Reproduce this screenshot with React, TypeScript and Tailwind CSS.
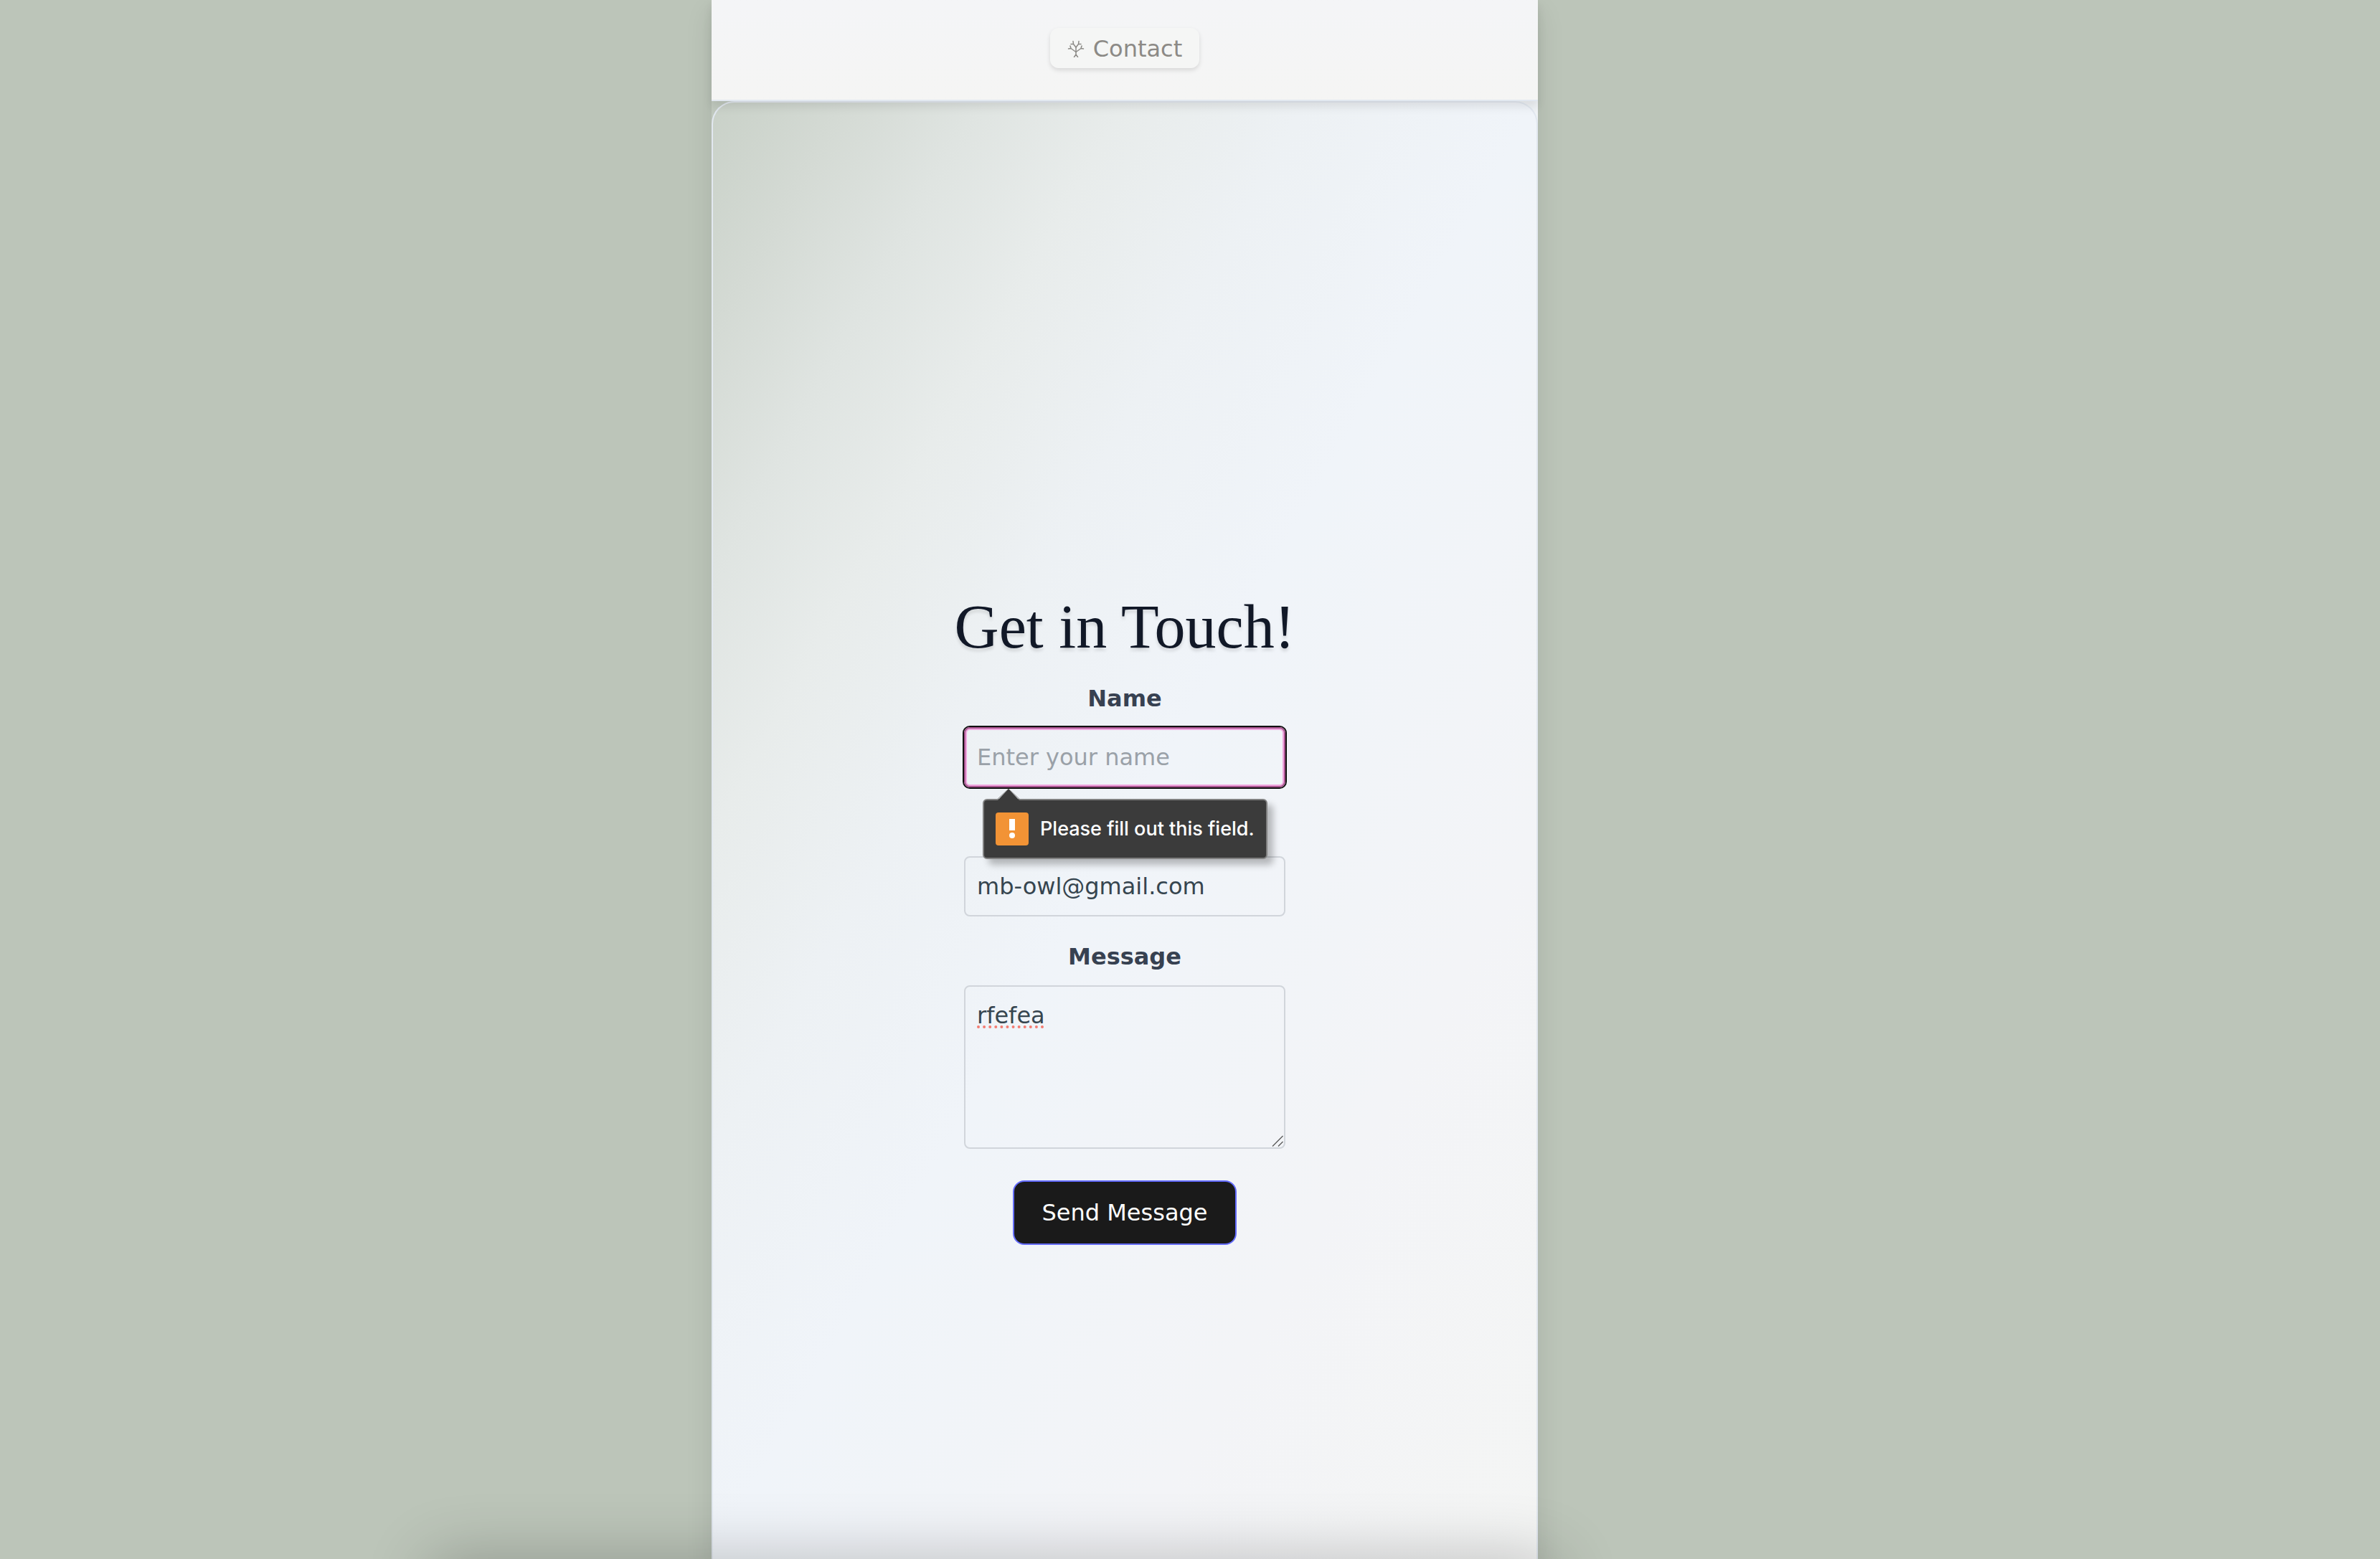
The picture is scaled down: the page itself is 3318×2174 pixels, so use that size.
import React from "react";

function TreeIcon() {
  return (
    <svg viewBox="0 0 24 24" className="size-6" fill="none" stroke="currentColor" strokeWidth="1.5" strokeLinecap="round" strokeLinejoin="round" aria-hidden="true">
      <path d="M12 20V10M12 20L9.500 23.500M12 20L14.500 23.500" />
      <path d="M12 16.500L5 11.500L1.500 12M5 11.500L4 8" />
      <path d="M12 16.500L19 11.500L22.500 12M19 11.500L20 8" />
      <path d="M12 10L8.500 5.500L8 1.500M8.500 5.500L5 5.500" />
      <path d="M12 10L15.500 5.500L16 1.500M15.500 5.500L19 5.500" />
    </svg>
  );
}

function Header() {
  return (
    <header className="relative z-10 flex h-[141px] items-start justify-center border-b-2 border-[#e2e8f0] bg-linear-to-b from-[#f4f5f7] to-[#f5f5f4] pt-[39px] shadow-[0_8px_12px_rgba(0,0,0,0.09)]">
      <a
        href="#contact"
        className="flex h-14 items-center gap-3 rounded-xl bg-[#f5f6f5] px-6 pt-0.5 text-[32px] leading-[48px] text-[#8c8a86] shadow-[0_3px_6px_rgba(0,0,0,0.12)]"
      >
        <TreeIcon />
        Contact
      </a>
    </header>
  );
}

function ValidationBubble() {
  return (
    <div
      role="alert"
      className="absolute top-full left-[26px] z-20 mt-4 flex h-[84px] items-center gap-4 rounded-md border-2 border-[#808080] bg-[#3b3b3b] px-4 font-['Inter',sans-serif] text-[27px] leading-8 font-medium whitespace-nowrap text-white shadow-[8px_8px_10px_rgba(0,0,0,0.25)]"
    >
      <svg viewBox="0 0 32 18" className="absolute -top-[17px] left-[18px] h-[18px] w-8" aria-hidden="true">
        <path d="M0 18L16 1L32 18Z" fill="#3b3b3b" />
        <path d="M0 16L16 1L32 16" fill="none" stroke="#808080" strokeWidth="1" />
      </svg>
      <svg viewBox="0 0 46 46" className="size-[46px]" aria-hidden="true">
        <rect width="46" height="46" rx="4" fill="#f29335" />
        <rect x="19" y="9" width="8" height="16" fill="#fff" />
        <circle cx="23" cy="32" r="4" fill="#fff" />
      </svg>
      Please fill out this field.
    </div>
  );
}

const labelClass = "text-center font-bold text-[#374151]";
const fieldClass =
  "block w-full rounded-lg border-2 border-[#d1d5db] bg-transparent px-4 py-4 text-[#36454f] placeholder:text-[#9aa1a8]";

function ContactForm() {
  return (
    <form noValidate className="flex w-[448px] flex-col text-[32px] leading-[48px]">
      <label htmlFor="name" className={labelClass}>
        Name
      </label>
      <div className="relative mt-4 mb-24">
        <input
          id="name"
          type="text"
          placeholder="Enter your name"
          className="block w-full rounded-lg border-2 border-[#a8548f] bg-transparent px-4 py-4 text-[#36454f] shadow-[0_0_0_2px_#101010,inset_0_0_0_2px_#f0a6df] outline-none placeholder:text-[#9aa1a8]"
        />
        <ValidationBubble />
      </div>
      <input id="email" type="email" aria-label="Email" defaultValue="mb-owl@gmail.com" className={`${fieldClass} mb-8`} />
      <label htmlFor="message" className={labelClass}>
        Message
      </label>
      <div className="relative mt-4 mb-11">
        <textarea id="message" rows={4} spellCheck={false} defaultValue="rfefea" className={`${fieldClass} h-[228px] resize-none`} />
        <svg viewBox="0 0 94 4" className="pointer-events-none absolute top-[56px] left-[18px] h-1 w-[94px]" aria-hidden="true">
          <path d="M2 2H93" stroke="#f47c72" strokeWidth="4" strokeLinecap="round" strokeDasharray="0 8.09" />
        </svg>
        <svg viewBox="0 0 16 16" className="pointer-events-none absolute right-[3px] bottom-[3px] size-4" fill="none" stroke="#5c5c5c" strokeWidth="1.4" aria-hidden="true">
          <path d="M1 15.500L15.500 1M9 15.500L15.500 9" />
        </svg>
      </div>
      <button type="submit" className="self-center rounded-2xl border-2 border-[#646cff] bg-[#1a1a1a] px-[38px] py-[19px] text-white">
        Send Message
      </button>
    </form>
  );
}

export default function App() {
  return (
    <div className="relative flex h-screen justify-center overflow-hidden bg-[#bcc5b9] pr-[182px] font-['DejaVu_Sans',Verdana,sans-serif]">
      <main className="flex w-full max-w-[1152px] flex-col bg-linear-to-br from-[#bcc5b9] via-[#eef2f6] via-40% to-[#f5f5f4] shadow-[0_16px_36px_rgba(0,0,0,0.1)]">
        <Header />
        <section className="flex flex-1 flex-col items-center rounded-t-[32px] border-2 border-b-0 border-[#e2e8f0] bg-[linear-gradient(to_bottom_right,#c9d1c8_0%,#d4dad4_8%,#dfe4e1_16%,#e8eceb_25%,#edf1f4_36%,#f0f4f9_50%,#f3f4f7_75%,#f4f5f4_100%)] pt-[687px]">
          <h1 className="mb-8 font-['Liberation_Serif',serif] text-[86px] leading-[88px] text-[#111827] [text-shadow:0_4px_4px_rgba(0,0,0,0.12)]">
            Get in Touch!
          </h1>
          <ContactForm />
        </section>
      </main>
      <div className="pointer-events-none absolute top-full right-[1150px] left-[600px] h-24 shadow-[0_0_90px_rgba(0,0,0,0.24)]" />
    </div>
  );
}
